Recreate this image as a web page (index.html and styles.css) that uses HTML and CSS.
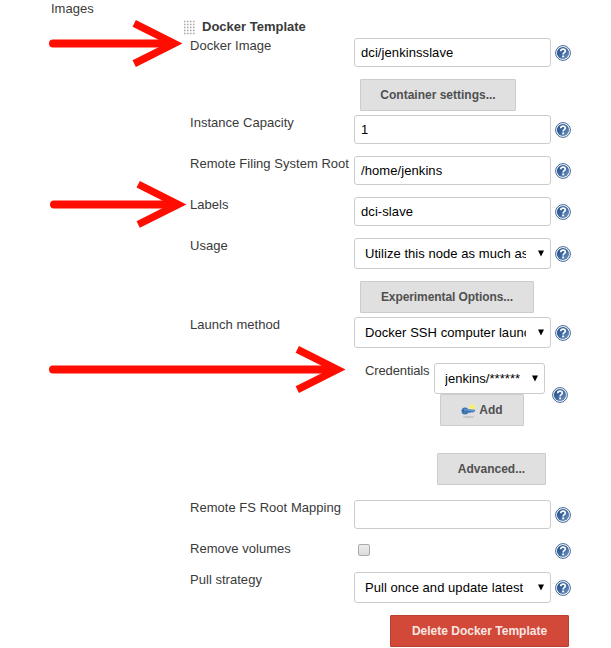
FILE: index.html
```html
<!DOCTYPE html>
<html lang="en">
<head>
<meta charset="utf-8">
<title>Docker Template</title>
<link rel="stylesheet" href="styles.css">
</head>
<body>
<svg class="defs" aria-hidden="true">
  <defs>
    <linearGradient id="blue" x1="0" y1="0" x2="1" y2="1">
      <stop offset="0" stop-color="#1f4a86"/><stop offset=".5" stop-color="#3c679f"/><stop offset="1" stop-color="#7d9dc4"/>
    </linearGradient>
    <symbol id="help" viewBox="0 0 16 16">
      <circle cx="8" cy="8" r="7.4" fill="#fff" stroke="#416898" stroke-width="1"/>
      <circle cx="8" cy="8" r="6.1" fill="url(#blue)"/>
      <path d="M5.7 6.2C5.8 3.5 10.3 3.4 10.3 6C10.3 7.7 8.1 7.7 8.1 9.4" fill="none" stroke="#fff" stroke-width="1.7"/>
      <rect x="7.2" y="10.5" width="1.9" height="1.8" fill="#fff"/>
    </symbol>
    <symbol id="caret" viewBox="0 0 6 7"><path d="M0 0.5H6L3 6.5Z" fill="#000"/></symbol>
  </defs>
</svg>
<main class="page">
  <div class="section">Images</div>
  <div class="heading">
    <svg class="grip" width="12" height="15"><path d="M1 1.5H12M1 4.5H12M1 7.5H12M1 10.5H12M1 13.5H12" stroke="#a4a4a4" stroke-width="1.4" stroke-dasharray="1.5 1.5"/></svg>
    <b>Docker Template</b>
  </div>
  <form class="form">
    <div class="row"><label>Docker Image</label><input class="field" value="dci/jenkinsslave"><svg class="help"><use href="#help"/></svg></div>
    <div class="row actions"><button type="button" class="btn container">Container settings...</button></div>
    <div class="row"><label>Instance Capacity</label><input class="field" value="1"><svg class="help"><use href="#help"/></svg></div>
    <div class="row"><label>Remote Filing System Root</label><input class="field" value="/home/jenkins"><svg class="help"><use href="#help"/></svg></div>
    <div class="row"><label>Labels</label><input class="field" value="dci-slave"><svg class="help"><use href="#help"/></svg></div>
    <div class="row usage"><label>Usage</label><div class="select"><span>Utilize this node as much as</span><svg class="caret"><use href="#caret"/></svg></div><svg class="help low"><use href="#help"/></svg></div>
    <div class="row actions"><button type="button" class="btn experimental">Experimental Options...</button></div>
    <div class="row launch"><label>Launch method</label><div class="select"><span>Docker SSH computer launc</span><svg class="caret"><use href="#caret"/></svg></div><svg class="help low"><use href="#help"/></svg></div>
    <div class="credentials">
      <label>Credentials</label>
      <div class="stack">
        <div class="select"><span>jenkins/******</span><svg class="caret"><use href="#caret"/></svg></div>
        <button type="button" class="btn add">
          <svg class="key" viewBox="0 0 16 16"><ellipse cx="8" cy="13.8" rx="6" ry="1" fill="#c4c4c4"/><circle cx="12" cy="3.2" r="2.8" fill="#f4ef91"/><path d="M12 0V6M9 3.2H15" stroke="#f8f24c" stroke-width="1.3"/><circle cx="4.3" cy="7.4" r="3.8" fill="#3f76b5"/><path d="M7 5.5L15 6V8H13.5V9H12V8L10.5 9.2H7Z" fill="#3f76b5"/><path d="M3 6.2L14 6.8" stroke="#78a3d2"/><circle cx="2.4" cy="7.2" r=".8" fill="#285487"/></svg>Add
        </button>
      </div>
      <svg class="help"><use href="#help"/></svg>
    </div>
    <div class="row advanced-row"><button type="button" class="btn advanced">Advanced...</button></div>
    <div class="row"><label>Remote FS Root Mapping</label><input class="field" value=""><svg class="help"><use href="#help"/></svg></div>
    <div class="row volumes"><label>Remove volumes</label><span class="check"></span><svg class="help"><use href="#help"/></svg></div>
    <div class="row usage"><label>Pull strategy</label><div class="select"><span>Pull once and update latest</span><svg class="caret"><use href="#caret"/></svg></div><svg class="help low"><use href="#help"/></svg></div>
    <div class="row delete-row"><button type="button" class="btn delete">Delete Docker Template</button></div>
  </form>
</main>
<svg class="arrows" width="611" height="648" fill="none" stroke="#ff0d00">
  <g stroke-width="8" stroke-linecap="round"><path d="M53 43.5H172M54 204.4H176M53 369.5H335"/></g>
  <g stroke-width="7.4"><path d="M134.2 23.4L174.2 43.5L134.2 63.6M138.2 184.3L178.2 204.4L138.2 224.5M297.3 349.4L337.3 369.5L297.3 389.6"/></g>
</svg>
</body>
</html>
```

FILE: styles.css
```css
* { box-sizing: border-box; }
body {
  margin: 0;
  background: #fff;
  color: #3a3a3a;
  font: 13px/15px "Liberation Sans", Arial, sans-serif;
}
.defs { position: absolute; width: 0; height: 0; }
.page { height: 648px; padding-top: 1px; overflow: hidden; }
.section { height: 18px; padding-left: 51px; }
.heading { display: flex; height: 19px; padding-left: 183px; gap: 7px; }
.grip { margin-top: 1px; }
.form { margin: 0 0 0 190px; }
.row {
  display: grid;
  grid-template-columns: 164px 197px 16px;
  column-gap: 0;
  align-items: start;
  height: 41px;
}
label { white-space: nowrap; letter-spacing: 0.03px; }
.field, .select {
  width: 197px;
  height: 29px;
  border: 1px solid #ccc;
  border-radius: 3px;
  background: #fff;
  color: #000;
}
.field { padding: 0 6px; font: 13px "Liberation Sans", Arial, sans-serif; letter-spacing: 0.08px; outline: none; }
.select { display: flex; align-items: center; height: 31px; padding: 0 6px 0 10px; }
.select span { width: 161px; overflow: hidden; white-space: nowrap; letter-spacing: 0.05px; }
.caret { width: 6px; height: 7px; margin-left: auto; }
.help { width: 16px; height: 16px; margin: 7px 0 0 4px; flex: none; }
.help.low { margin-top: 8px; }
.btn {
  height: 32px;
  padding: 0;
  border: 1px solid #ccc;
  border-radius: 1px;
  background: #e0e0e0;
  color: #505050;
  font: bold 12px "Liberation Sans", Arial, sans-serif;
  white-space: nowrap;
}
.row.actions { display: block; height: 36px; padding-left: 170px; }
.container { width: 156px; }
.experimental { width: 174px; letter-spacing: -0.08px; }
.row.usage { height: 43px; }
.row.launch { height: 46px; }
.credentials { display: flex; height: 90px; padding-left: 175px; }
.credentials label { width: 69px; letter-spacing: -0.12px; }
.stack { width: 111px; }
.stack .select { width: 111px; }
.stack .select span { width: 80px; }
.credentials .help { margin: 24px 0 0 7px; }
.add { display: flex; align-items: center; justify-content: center; gap: 3px; width: 84px; margin-left: 6px; }
.key { width: 15px; height: 15px; margin-top: 2px; }
.row.advanced-row { display: block; height: 47px; padding-left: 247px; }
.advanced { width: 109px; }
.row.volumes { height: 31px; }
.volumes .help { margin-top: 2px; }
.check {
  width: 12px;
  height: 12px;
  margin: 3px 0 0 4px;
  border: 1px solid #aaa;
  border-radius: 2px;
  background: linear-gradient(#ececec, #dcdcdc);
}
.row.delete-row { display: block; height: 33px; padding-left: 200px; }
.delete { width: 179px; background: #d24939; border-color: #b8402f; color: #f8e6e3; }
.arrows { position: absolute; top: 0; left: 0; pointer-events: none; }
```
